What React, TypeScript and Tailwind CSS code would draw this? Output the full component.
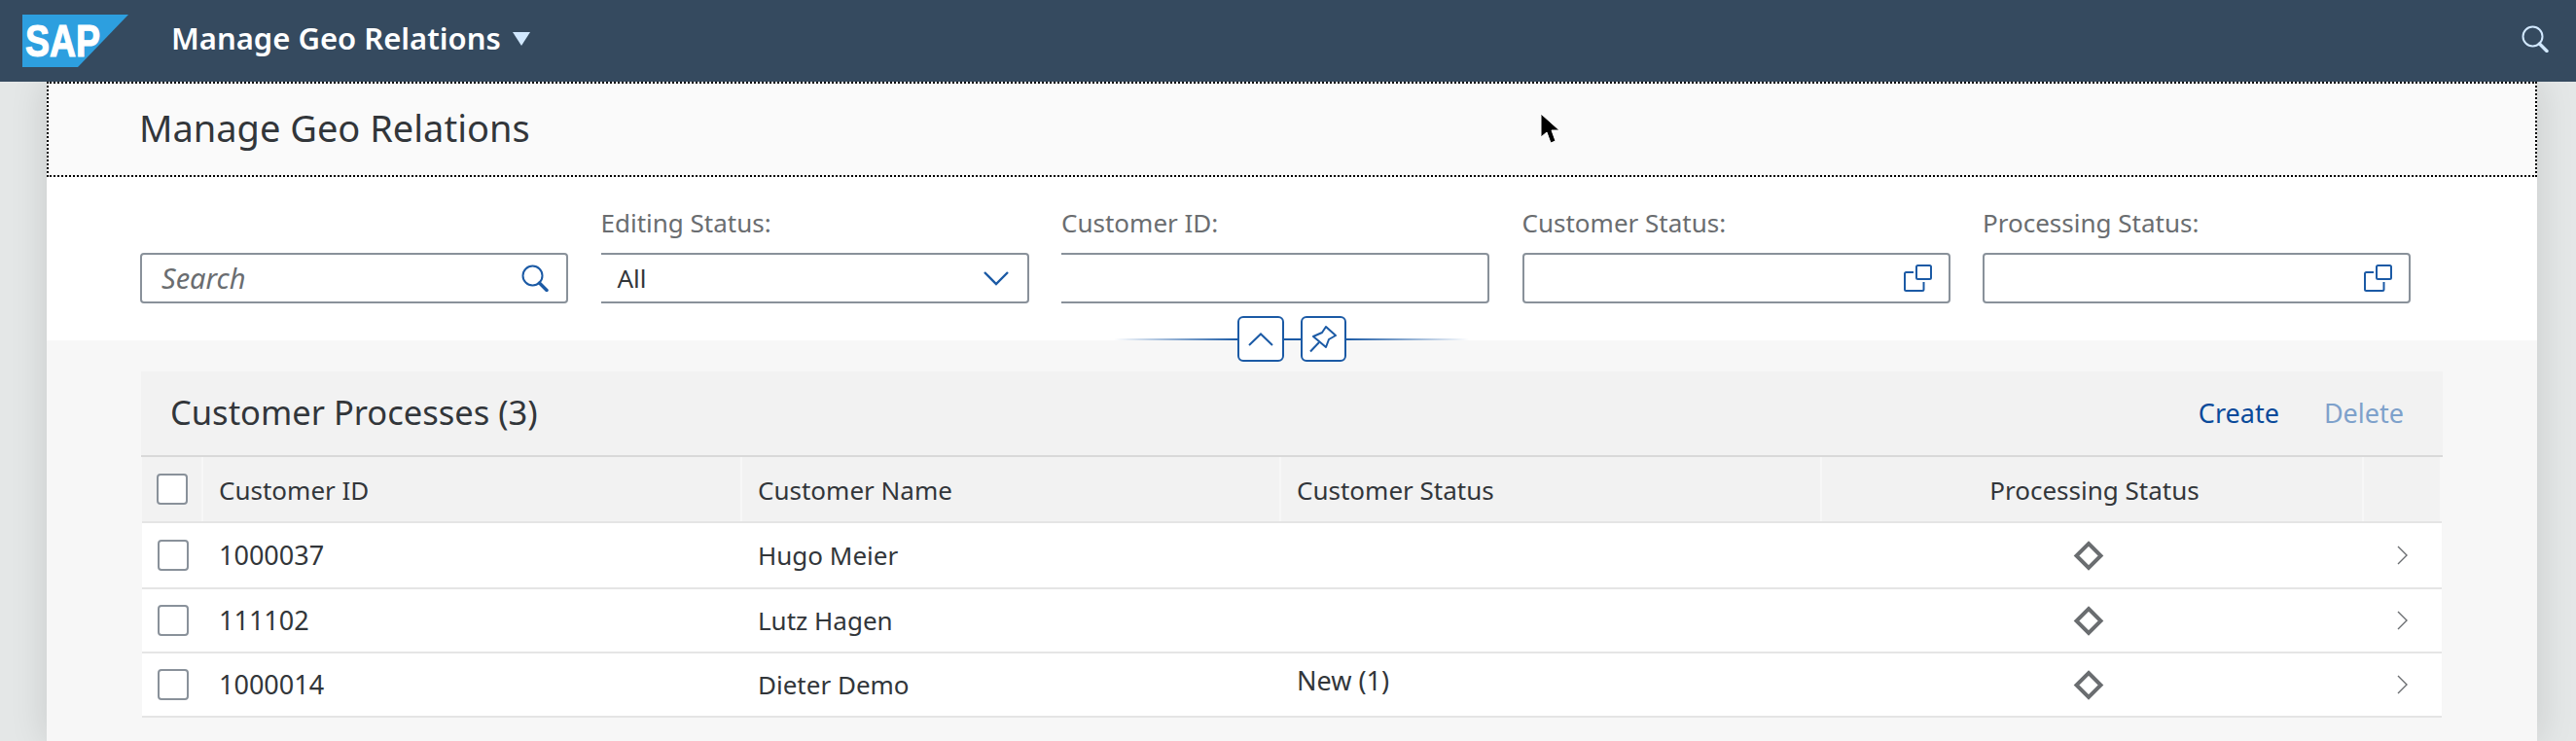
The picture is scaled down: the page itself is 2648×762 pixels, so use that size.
const blue = "#1b5aa5";

function SearchGlass({ color, size }: { color: string; size: number }) {
  return (
    <svg width={size} height={size} viewBox="0 0 28 28" fill="none" stroke={color} strokeWidth="2">
      <circle cx="11.5" cy="11.5" r="10" />
      <path d="M18.5 19 L26 26.5" strokeWidth="3.4" strokeLinecap="round" />
    </svg>
  );
}

function CopyIcon() {
  return (
    <svg width="29" height="28" viewBox="0 0 29 28" fill="none" stroke={blue} strokeWidth="2">
      <rect x="13" y="1" width="15" height="14" rx="1.5" />
      <path d="M10 8 H2.5 a1.5 1.5 0 0 0 -1.5 1.5 V25.5 a1.5 1.5 0 0 0 1.5 1.5 H19 a1.5 1.5 0 0 0 1.5 -1.5 V18" />
    </svg>
  );
}

function Diamond() {
  return (
    <svg width="32" height="31" viewBox="0 0 32 31" fill="none" stroke="#6a6d70" strokeWidth="4">
      <path d="M16 3 L28.5 15.5 L16 28 L3.5 15.5 Z" />
    </svg>
  );
}

function Checkbox() {
  return <span className="block h-[32px] w-[32px] rounded-[4px] border-2 border-[#89919a] bg-white" />;
}

function FilterField({ label, clipped, children }: { label?: string; clipped?: boolean; children?: React.ReactNode }) {
  return (
    <div className="w-[440px]">
      <div className="mb-[12px] h-[38px] text-[26px] leading-[38px] text-[#6a6d70]">{label}</div>
      <div
        className={`flex h-[52px] items-center justify-between rounded-[4px] border-2 border-[#89919a] bg-white ${
          clipped ? "rounded-l-none border-l-0" : ""
        }`}
      >
        {children}
      </div>
    </div>
  );
}

const columns = "grid grid-cols-[63px_554px_554px_556px_557px_80px]";

const rows = [
  { id: "1000037", name: "Hugo Meier", status: "", height: "h-[68px]" },
  { id: "111102", name: "Lutz Hagen", status: "", height: "h-[66px]" },
  { id: "1000014", name: "Dieter Demo", status: "New (1)", height: "h-[66px]" },
];

export default function App() {
  return (
    <div className="relative flex h-[762px] flex-col overflow-hidden bg-[#e4e7e7] font-['Noto_Sans',sans-serif] text-[#32363a]">
      <header className="relative z-10 flex h-[84px] shrink-0 items-center bg-[#354a5f] pl-[23px] pr-[28px]">
        <svg width="109" height="54" viewBox="0 0 109 54">
          <polygon points="0,0 109,0 57,54 0,54" fill="#2d9fdf" />
          <text
            x="3"
            y="43"
            fill="#fff"
            stroke="#fff"
            strokeWidth="1.2"
            fontFamily="Liberation Sans"
            fontWeight="700"
            fontSize="46"
            textLength="77"
            lengthAdjust="spacingAndGlyphs"
          >
            SAP
          </text>
        </svg>
        <div className="mb-[5px] ml-[44px] text-[31px] font-semibold text-white">Manage Geo Relations</div>
        <svg className="mb-[4px] ml-[12px]" width="18" height="14" viewBox="0 0 18 14">
          <polygon points="0,0 18,0 9,14" fill="#d1e8ff" />
        </svg>
        <div className="mb-[5px] ml-auto">
          <SearchGlass color="#d1e8ff" size={28} />
        </div>
      </header>

      <div className="ml-[48px] mr-[40px] flex flex-1 flex-col bg-[#f7f7f7] shadow-[0_0_36px_rgba(0,0,0,0.13)]">
        <div className="flex h-[98px] shrink-0 items-center border-2 border-dotted border-black bg-[#fafafa] pb-[3px] pl-[93px] text-[38px]">
          Manage Geo Relations
        </div>

        <div className="relative flex h-[168px] shrink-0 gap-[33.5px] bg-white pl-[96px] pt-[28px]">
          <FilterField>
            <span className="pl-[20px] text-[29px] italic text-[#6a6d70]">Search</span>
            <span className="flex pr-[18px]">
              <SearchGlass color={blue} size={28} />
            </span>
          </FilterField>
          <FilterField label="Editing Status:" clipped>
            <span className="pl-[17px] text-[26px]">All</span>
            <svg className="mr-[19px]" width="26" height="16" viewBox="0 0 26 16" fill="none" stroke={blue} strokeWidth="2.4">
              <path d="M1 2 L13 14 L25 2" />
            </svg>
          </FilterField>
          <FilterField label="Customer ID:" clipped />
          <FilterField label="Customer Status:">
            <span />
            <span className="mr-[17px] flex">
              <CopyIcon />
            </span>
          </FilterField>
          <FilterField label="Processing Status:">
            <span />
            <span className="mr-[17px] flex">
              <CopyIcon />
            </span>
          </FilterField>

          <div className="absolute left-[1097px] top-[143px] flex h-[47px] w-[365px] items-center">
            <div className="h-[2px] flex-1 bg-gradient-to-r from-transparent to-[#1b5aa5]" />
            <button className="flex h-[47px] w-[48px] items-center justify-center rounded-[6px] border-2 border-[#1b5aa5] bg-white">
              <svg width="26" height="14" viewBox="0 0 26 14" fill="none" stroke={blue} strokeWidth="2">
                <path d="M1 13 L13 1.5 L25 13" />
              </svg>
            </button>
            <div className="h-[2px] w-[17px] bg-[#1b5aa5]" />
            <button className="flex h-[47px] w-[47px] items-center justify-center rounded-[6px] border-2 border-[#1b5aa5] bg-white">
              <svg width="28" height="28" viewBox="0 0 28 28" fill="none" stroke={blue} strokeWidth="2">
                <path d="M17 1 L27 10 L20 14 L17 22 L4 11 L13 7 Z" strokeLinejoin="round" />
                <path d="M10 17 L1 26.5" />
              </svg>
            </button>
            <div className="h-[2px] flex-1 bg-gradient-to-l from-transparent to-[#1b5aa5]" />
          </div>
        </div>

        <section className="ml-[97px] mr-[97px] mt-[32px]">
          <div className="flex h-[88px] items-center justify-between border-b-2 border-[#d9d9d9] bg-[#f2f2f2] pl-[30px] pr-[40px]">
            <h2 className="pb-[2px] text-[34.5px] font-normal">Customer Processes (3)</h2>
            <div className="flex gap-[46px] text-[27px]">
              <span className="text-[#0a4a9a]">Create</span>
              <span className="text-[#7ea1cb]">Delete</span>
            </div>
          </div>

          <div className="mx-[1px]">
            <div className={`${columns} h-[68px] items-stretch border-b-2 border-[#e5e5e5] bg-[#f2f2f2] text-[26px]`}>
              <div className="flex items-center justify-center border-r-2 border-[#f7f7f7]">
                <Checkbox />
              </div>
              <div className="flex items-center border-r-2 border-[#f7f7f7] pl-[16px] pt-[2px]">Customer ID</div>
              <div className="flex items-center border-r-2 border-[#f7f7f7] pl-[16px] pt-[2px]">Customer Name</div>
              <div className="flex items-center border-r-2 border-[#f7f7f7] pl-[16px] pt-[2px]">Customer Status</div>
              <div className="flex items-center justify-center border-r-2 border-[#f7f7f7] pl-[5px] pt-[2px]">Processing Status</div>
              <div className="border-r-2 border-[#f7f7f7]" />
            </div>

            {rows.map((row) => (
              <div key={row.id} className={`${columns} ${row.height} items-center border-b-2 border-[#e5e5e5] bg-white text-[26px]`}>
                <div className="flex justify-center">
                  <Checkbox />
                </div>
                <div className="pl-[16px] text-[27px]">{row.id}</div>
                <div className="pl-[16px]">{row.name}</div>
                <div className="pb-[7px] pl-[16px] text-[27px]">{row.status}</div>
                <div className="flex justify-center pr-[10px]">
                  <Diamond />
                </div>
                <div className="flex justify-end pr-[35px]">
                  <svg width="11" height="20" viewBox="0 0 11 20" fill="none" stroke="#6a6d70" strokeWidth="1.4">
                    <path d="M1 1 L10 10 L1 19" />
                  </svg>
                </div>
              </div>
            ))}
          </div>
        </section>
      </div>

      <svg className="absolute left-[1582px] top-[116px]" width="24" height="34" viewBox="0 0 24 34">
        <path d="M2 1 L2 25 L8 20 L12 31 L17 29 L13 18 L21 18 Z" fill="#000" stroke="#fff" strokeWidth="1" />
      </svg>
    </div>
  );
}
